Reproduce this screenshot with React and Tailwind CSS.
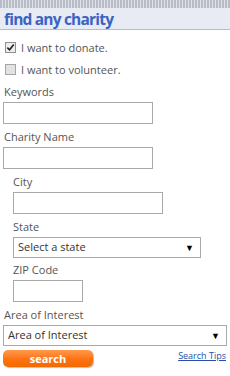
export default function App() {
  const label = "text-[11px] leading-[11px] text-[#555]";
  const input = "block h-[22px] border border-[#a9a9a9] bg-white";
  return (
    <div className="w-[230px] h-[376px] bg-white overflow-hidden" style={{ fontFamily: '"Open Sans", sans-serif' }}>
      {/* header */}
      <div className="h-[8px] bg-[repeating-linear-gradient(90deg,#b8bcc6_0px,#b8bcc6_2px,#dfe2e8_2px,#dfe2e8_3px)]" />
      <div className="h-[22px] bg-[#e8ebf3] border-b border-[#b9bcc4] flex items-end pl-[4px]">
        <span className="text-[15.5px] leading-[20px] font-bold text-[#3b63c4] tracking-[-0.8px]">find any charity</span>
      </div>

      <div className="pt-[12px]">
        <label className="flex items-center gap-[5px] pl-[5px]">
          <span className="w-[11px] h-[11px] border border-[#8f8f8f] bg-[#eee] flex items-center justify-center">
            <svg viewBox="0 0 10 10" className="w-[9px] h-[9px]"><path d="M1.5 5.2 L4 7.6 L8.6 1.8" fill="none" stroke="#222" strokeWidth="1.8" /></svg>
          </span>
          <span className={label}>I want to donate.</span>
        </label>
        <label className="flex items-center gap-[5px] pl-[5px] mt-[11px]">
          <span className="w-[11px] h-[11px] border border-[#a5a5a5] bg-[#e2e2e2]" />
          <span className={label}>I want to volunteer.</span>
        </label>

        <div className="pl-[3px] mt-[11px]">
          <div className={`${label} pl-[1px]`}>Keywords</div>
          <div className={`${input} w-[150px] mt-[5px]`} />
          <div className={`${label} pl-[1px] mt-[7px]`}>Charity Name</div>
          <div className={`${input} w-[150px] mt-[5px]`} />
        </div>

        <div className="pl-[13px] mt-[7px]">
          <div className={label}>City</div>
          <div className={`${input} w-[150px] mt-[5px]`} />
          <div className={`${label} mt-[7px]`}>State</div>
          <div className="mt-[5px] w-[188px] h-[21px] border border-[#a9a9a9] flex items-center justify-between pl-[4px] pr-[6px]">
            <span className="text-[11px] text-[#333]">Select a state</span>
            <span className="text-[9px] text-black">▼</span>
          </div>
          <div className={`${label} mt-[6px]`}>ZIP Code</div>
          <div className={`${input} w-[70px] mt-[5px]`} />
        </div>

        <div className="pl-[3px] mt-[7px]">
          <div className={`${label} pl-[1px]`}>Area of Interest</div>
          <div className="mt-[5px] w-[224px] h-[21px] border border-[#a9a9a9] flex items-center justify-between pl-[4px] pr-[6px]">
            <span className="text-[11px] text-[#333]">Area of Interest</span>
            <span className="text-[9px] text-black">▼</span>
          </div>
          <div className="mt-[4px] flex items-start justify-between pr-[4px]">
            <button className="w-[90px] h-[17px] rounded-[5px] bg-gradient-to-b from-[#ff9a4a] via-[#ff7412] to-[#f26a00] shadow-[1px_1px_1px_rgba(0,0,0,0.25)] text-white text-[11px] font-bold leading-none">
              search
            </button>
            <a className="text-[9px] text-[#2a4ea8] underline leading-none mt-[1px]">Search Tips</a>
          </div>
        </div>
      </div>
    </div>
  );
}
